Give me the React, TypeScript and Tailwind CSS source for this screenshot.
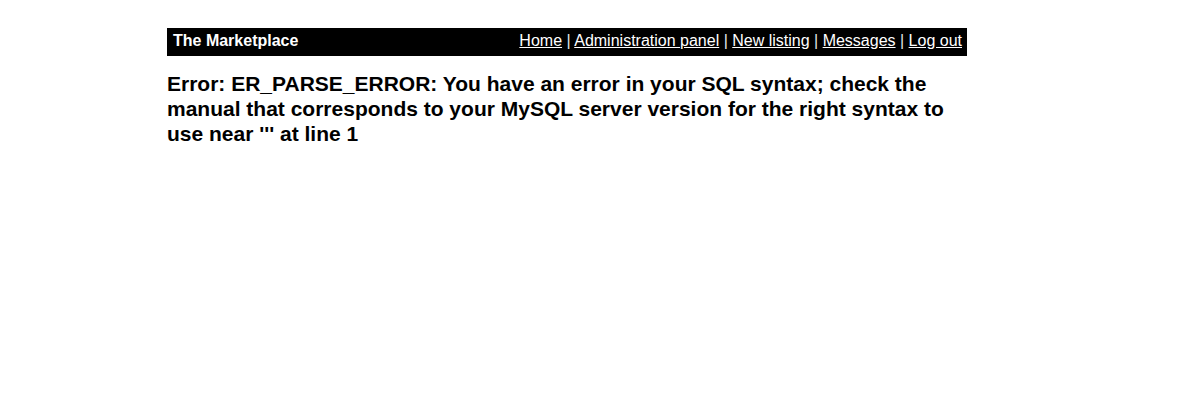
export default function App() {
  const links = ["Home", "Administration panel", "New listing", "Messages", "Log out"];

  return (
    <div className="min-h-screen bg-white font-['Liberation_Sans',Arial,sans-serif] text-black">
      <div className="ml-[167px] w-[800px] pt-[28px]">
        <div className="flex h-[28px] items-center justify-between bg-black pb-[2px] pl-[6px] pr-[5px] text-[16px] text-white">
          <span className="font-bold">The Marketplace</span>
          <nav>
            {links.map((link, i) => (
              <span key={link}>
                {i > 0 && <span className="text-gray-200"> | </span>}
                <a href="#" className="text-white underline">
                  {link}
                </a>
              </span>
            ))}
          </nav>
        </div>
        <h2 className="mt-[15px] text-[21px] font-bold leading-[25px]">
          Error: ER_PARSE_ERROR: You have an error in your SQL syntax; check the manual that corresponds to your MySQL
          server version for the right syntax to use near ''' at line 1
        </h2>
      </div>
    </div>
  );
}
